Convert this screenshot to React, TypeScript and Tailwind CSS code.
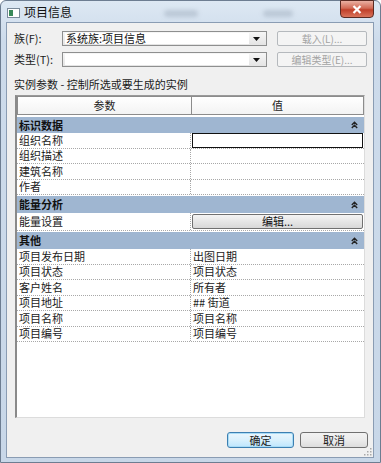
import React from 'react';

type Row = { name: string; value?: string; kind?: 'selected' | 'button' };
type Group = { title: string; rows: Row[] };

const groups: Group[] = [
  {
    title: '标识数据',
    rows: [
      { name: '组织名称', kind: 'selected' },
      { name: '组织描述' },
      { name: '建筑名称' },
      { name: '作者' },
    ],
  },
  {
    title: '能量分析',
    rows: [{ name: '能量设置', value: '编辑...', kind: 'button' }],
  },
  {
    title: '其他',
    rows: [
      { name: '项目发布日期', value: '出图日期' },
      { name: '项目状态', value: '项目状态' },
      { name: '客户姓名', value: '所有者' },
      { name: '项目地址', value: '## 街道' },
      { name: '项目名称', value: '项目名称' },
      { name: '项目编号', value: '项目编号' },
    ],
  },
];

function Arrow() {
  return (
    <svg width="7" height="4" viewBox="0 0 7 4" className="shrink-0">
      <path d="M0 0h7L3.5 4z" fill="#111" />
    </svg>
  );
}

function Collapse() {
  return (
    <svg width="7" height="8" viewBox="0 0 7 8" className="shrink-0">
      <path d="M0.8 4L3.5 1.3 6.2 4M0.8 7L3.5 4.3 6.2 7" fill="none" stroke="#222" strokeWidth="1.4" />
    </svg>
  );
}

function Combo({ text }: { text: string }) {
  return (
    <div className="flex h-[15px] w-[205px] shrink-0 items-center border border-[#8e8f8f] bg-[linear-gradient(#f6f6f6,#e4e4e4)] pl-[2px] pr-[6px]">
      <div className="flex h-[11px] flex-1 items-center bg-white pl-[1px] text-[11px] leading-none text-[#111]">{text}</div>
      <div className="ml-[4px]">
        <Arrow />
      </div>
    </div>
  );
}

function DisabledButton({ label }: { label: string }) {
  return (
    <div className="flex h-[15px] w-[90px] items-center justify-center rounded-[2px] border border-[#b5b9bd] bg-[#f4f4f4] text-[10px] leading-none text-[#a3a3a3]">
      {label}
    </div>
  );
}

export default function App() {
  return (
    <div className="flex h-[463px] w-[381px] flex-col rounded-t-[6px] border border-[#6d7d91] bg-[linear-gradient(#dde8f3,#cddbeb_40px,#c8d7e8)] font-['Noto_Sans_CJK_SC',sans-serif] text-[#1b1b1b]">
      {/* Title bar */}
      <div className="flex h-[21px] shrink-0 items-start">
        <div className="mt-[7px] ml-[6px] flex h-[10px] w-[13px] shrink-0 items-center border border-[#7a8a9a] bg-white pl-[1px]">
          <div className="h-[6px] w-[4px] bg-[#3a8a5a]" />
        </div>
        <span className="mt-[4px] ml-[4px] shrink-0 text-[12px] leading-[14px] text-[#111]">项目信息</span>
        <div className="mt-[9px] ml-[92px] h-[7px] w-[34px] shrink-0 rounded-full bg-[#9fadbd] opacity-50 blur-[2px]" />
        <div className="mt-[9px] ml-[65px] h-[7px] w-[30px] shrink-0 rounded-full bg-[#9fadbd] opacity-50 blur-[2px]" />
        <div className="-mt-[1px] ml-auto mr-[6px] flex h-[18px] w-[34px] shrink-0 items-center justify-center rounded-b-[4px] border border-[#5a2a22] bg-[linear-gradient(#eab0a2,#d26a55_45%,#c0402a_55%,#d9735a)]">
          <svg width="10" height="9" viewBox="0 0 10 9">
            <path d="M1.5 1L8.5 8M8.5 1L1.5 8" stroke="#fff" strokeWidth="2.2" />
          </svg>
        </div>
      </div>

      {/* Client area */}
      <div className="mb-[5px] ml-[5px] mr-[6px] flex flex-1 flex-col border border-[#8a9cb3] bg-[#f0f0f0]">
        <div className="mt-[8px] flex h-[15px] items-center">
          <span className="w-[55px] shrink-0 pl-[7px] text-[11px] leading-none">族(F):</span>
          <Combo text="系统族:项目信息" />
          <div className="ml-[10px]">
            <DisabledButton label="载入(L)..." />
          </div>
        </div>
        <div className="mt-[6px] flex h-[15px] items-center">
          <span className="w-[55px] shrink-0 pl-[7px] text-[11px] leading-none">类型(T):</span>
          <Combo text="" />
          <div className="ml-[10px]">
            <DisabledButton label="编辑类型(E)..." />
          </div>
        </div>

        <div className="mt-[10px] pl-[7px] text-[11px] leading-[14px]">实例参数 - 控制所选或要生成的实例</div>

        {/* Property grid */}
        <div className="mx-[8px] mt-[4px] h-[323px] border-t border-l-2 border-b border-r border-t-[#9a9a9a] border-l-[#8a8a8a] border-b-[#dcdcdc] border-r-[#dcdcdc] bg-white text-[11px] leading-none">
          <div className="flex h-[19px] border border-[#8c8c8c] bg-[linear-gradient(#ffffff,#f3f3f3)]">
            <div className="flex w-[174px] items-center justify-center border-r border-[#8c8c8c]">参数</div>
            <div className="flex flex-1 items-center justify-center">值</div>
          </div>
          {groups.map((g, gi) => (
            <div key={g.title}>
              <div className={`${gi === 0 ? 'mt-[2px] h-[16px]' : 'mt-[1px] h-[17px]'} flex items-center justify-between bg-[#9fb6d1] pl-[2px] pr-[6px] font-bold text-[#111]`}>
                <span>{g.title}</span>
                <Collapse />
              </div>
              {g.rows.map((r) => (
                <div
                  key={r.name}
                  className={`${r.kind === 'button' ? 'h-[18px]' : 'h-[15.5px]'} flex border-b border-dotted border-[#a8a8a8]`}
                >
                  <div className="flex w-[174px] items-center border-r border-dotted border-[#a8a8a8] pl-[2px]">{r.name}</div>
                  <div className="flex flex-1 items-center">
                    {r.kind === 'selected' && <div className="mx-[1px] h-full flex-1 border border-[#111] bg-white" />}
                    {r.kind === 'button' && (
                      <div className="mx-[1px] flex h-[15px] flex-1 items-center justify-center rounded-[2px] border border-[#707070] bg-[linear-gradient(#f4f4f4,#e6e6e6_50%,#d8d8d8)] text-[#111]">
                        {r.value}
                      </div>
                    )}
                    {!r.kind && r.value && <span className="pl-[2px]">{r.value}</span>}
                  </div>
                </div>
              ))}
            </div>
          ))}
        </div>

        {/* Buttons */}
        <div className="mt-[14px] flex justify-end gap-[6px] pr-[5px]">
          <div className="flex h-[16px] w-[67px] items-center justify-center rounded-[3px] border border-[#3c7fb1] bg-[linear-gradient(#eaf6fd,#d9f0fc_50%,#bee6fd)] text-[11px] leading-none shadow-[inset_0_0_0_1px_#a9dcf6]">
            确定
          </div>
          <div className="flex h-[16px] w-[68px] items-center justify-center rounded-[3px] border border-[#707070] bg-[linear-gradient(#f2f2f2,#ebebeb_50%,#dddddd)] text-[11px] leading-none">
            取消
          </div>
        </div>
        <div className="mt-auto flex justify-end pr-[1px] pb-[1px]">
          <svg width="8" height="8" viewBox="0 0 8 8">
            <g fill="#a9a9a9">
              <rect x="6" y="0" width="1.5" height="1.5" />
              <rect x="3" y="3" width="1.5" height="1.5" />
              <rect x="6" y="3" width="1.5" height="1.5" />
              <rect x="0" y="6" width="1.5" height="1.5" />
              <rect x="3" y="6" width="1.5" height="1.5" />
              <rect x="6" y="6" width="1.5" height="1.5" />
            </g>
          </svg>
        </div>
      </div>
    </div>
  );
}
